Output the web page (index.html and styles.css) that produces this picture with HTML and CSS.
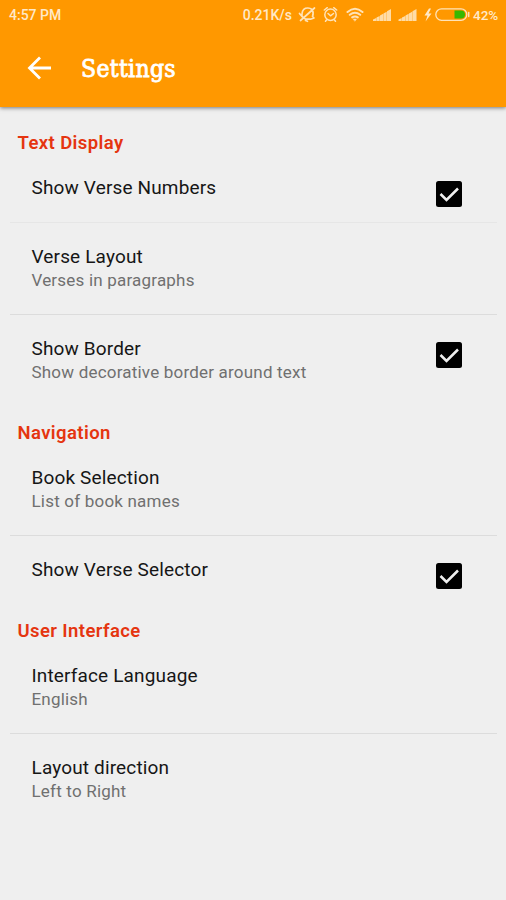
FILE: index.html
```html
<!DOCTYPE html>
<html lang="en">
<head>
<meta charset="utf-8">
<title>Settings</title>
<link rel="stylesheet" href="styles.css">
</head>
<body>
<header class="header">
  <div class="status">
    <span class="time">4:57 PM</span>
    <span class="speed">0.21K/s</span>
    <svg class="status-icons" width="172" height="20" viewBox="298 5 172 20" fill="none" stroke="#ffe3b8" stroke-width="1.5" stroke-linecap="round" stroke-linejoin="round">
      <path d="M302 16.500q-.5-6.500 3.500-8.200 4-1 6.500 1.200 2 3 .5 7l1.500 1.500-3.500 1.200h-5zM299.500 13.500l2.500 3M314.500 8L300.500 20.500M305.500 20.500l2 .8" stroke-width="1.700"/>
      <circle cx="330.500" cy="14.800" r="5.700"/><path d="M328 13.500l2.500 2.300 3-2.300M324.300 10l3-2.300M336.700 10l-3-2.300M326.500 20l-1 1.300M334.500 20l1 1.300"/>
      <path d="M347.500 12q7.500-6.500 15 0M349.800 14.800q5.200-4 10.400 0M352.200 17.400q2.800-2 5.600 0" stroke-width="2"/><path d="M353.500 19h3l-1.500 2z" fill="#ffe3b8" stroke-width=".5"/>
      <g stroke="none" fill="#ffdca6"><path d="M373 21v-1.500l3.200-1.500v3zM376.500 21v-3.400l3.200-1.600v5zM380 21v-5.400l3.200-1.800v7.200zM383.500 21v-7.600l3.200-1.700v9.300zM387 21v-9.700l4-2.300v12z"/><path d="M398.500 21v-1.500l3.200-1.500v3zM402 21v-3.400l3.200-1.600v5zM405.500 21v-5.400l3.200-1.800v7.200zM409 21v-7.600l3.200-1.700v9.300zM412.500 21v-9.700l4-2.300v12z"/></g>
      <path d="M429 8.500l-4.500 7h3l-2 6 6-8h-3l2.500-5z" fill="#ffe9c9" stroke="none"/>
      <rect x="435.800" y="8.800" width="31" height="11.500" rx="5.750" stroke-width="1.300"/>
      <path d="M468.700 12.500v4" stroke-width="1.500"/>
      <path d="M454.500 10.500h6.500a4 4 0 0 1 0 8h-6.500z" fill="#38b800" stroke="none"/>
    </svg>
    <span class="percent">42%</span>
  </div>
  <div class="toolbar">
    <svg class="back" width="24" height="24" viewBox="0 0 24 24" fill="none" stroke="#fff" stroke-width="2.800"><path d="M24 12H3.500M13 1.500L2.500 12l10.500 10.500"/></svg>
    <h1>Settings</h1>
  </div>
</header>
<main>
  <section>
    <h2>Text Display</h2>
    <div class="row short"><div><p class="title">Show Verse Numbers</p></div><svg class="check" viewBox="0 0 26 26"><rect width="26" height="26" rx="2.500"/><path d="M4.500 13l6 6L22 7.500"/></svg></div>
    <div class="row"><div><p class="title">Verse Layout</p><p class="sub">Verses in paragraphs</p></div></div>
    <div class="row"><div><p class="title">Show Border</p><p class="sub">Show decorative border around text</p></div><svg class="check" viewBox="0 0 26 26"><rect width="26" height="26" rx="2.500"/><path d="M4.500 13l6 6L22 7.500"/></svg></div>
  </section>
  <section>
    <h2>Navigation</h2>
    <div class="row"><div><p class="title">Book Selection</p><p class="sub">List of book names</p></div></div>
    <div class="row short"><div><p class="title">Show Verse Selector</p></div><svg class="check" viewBox="0 0 26 26"><rect width="26" height="26" rx="2.500"/><path d="M4.500 13l6 6L22 7.500"/></svg></div>
  </section>
  <section>
    <h2>User Interface</h2>
    <div class="row"><div><p class="title">Interface Language</p><p class="sub">English</p></div></div>
    <div class="row"><div><p class="title">Layout direction</p><p class="sub">Left to Right</p></div></div>
  </section>
</main>
</body>
</html>
```
FILE: styles.css
```css
* { box-sizing: border-box; }
body { margin: 0; min-height: 900px; background: #efefef; font-family: Roboto, sans-serif; color: #161616; }
h1, h2, p { margin: 0; }
.header { height: 107px; background: #ff9800; box-shadow: 0 1px 4px rgba(0, 0, 0, .5); }
.status { display: flex; align-items: center; height: 30px; padding: 0 8px 0 9px; font-size: 14px; font-weight: 500; color: #ffe9c9; }
.speed { margin-left: auto; margin-right: 6px; }
.percent { width: 25px; margin-left: 3px; font-size: 13.500px; }
.toolbar { display: flex; align-items: center; height: 77px; padding-left: 27px; }
.back { margin: -1px 30px 0 0; }
h1 { font: 400 24.500px/30px "DejaVu Serif Condensed", "DejaVu Serif", serif; font-stretch: condensed; letter-spacing: .3px; color: #fff; -webkit-text-stroke: .8px #fff; }
main { padding-top: 10px; }
h2 { height: 37px; padding: 14px 0 0 17.500px; font-size: 18.5px; line-height: 24px; font-weight: 600; letter-spacing: .4px; color: #e53510; }
.row { display: flex; justify-content: space-between; height: 92px; margin: 0 9px 0 10px; padding: 22px 35px 0 21.500px; border-bottom: 1px solid #dcdcdc; }
.row.short { height: 69px; border-color: #e6e6e6; }
.row:last-child { border-color: transparent; }
.title { font-size: 19px; line-height: 24px; letter-spacing: .15px; }
.sub { font-size: 17px; line-height: 22px; letter-spacing: .2px; color: #707070; }
.check { width: 26px; height: 26px; margin-top: 5px; fill: #000; }
.check path { fill: none; stroke: #efefef; stroke-width: 2.500; }
```
